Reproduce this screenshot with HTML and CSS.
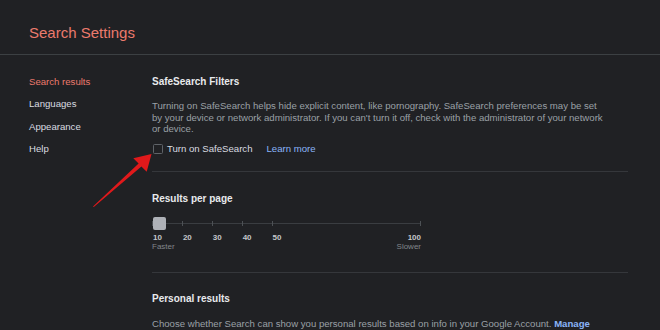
FILE: index.html
```html
<!DOCTYPE html>
<html lang="en">
<head>
  <meta charset="UTF-8" />
  <title>Search Settings</title>
  <link rel="stylesheet" href="styles.css">
</head>
<body>
  <header class="topbar">
    <h1>Search Settings</h1>
  </header>

  <div class="layout">
    <nav class="sidebar">
      <a class="nav-item active">Search results</a>
      <a class="nav-item">Languages</a>
      <a class="nav-item">Appearance</a>
      <a class="nav-item">Help</a>
    </nav>

    <main class="content">
      <section class="block first">
        <h2>SafeSearch Filters</h2>
        <p class="desc wrap">Turning on SafeSearch helps hide explicit content, like pornography. SafeSearch preferences may be set by your device or network administrator. If you can't turn it off, check with the administrator of your network or device.</p>
        <div class="check-row">
          <span class="checkbox"></span>
          <span class="check-label">Turn on SafeSearch</span>
          <a class="link">Learn more</a>
        </div>
      </section>

      <section class="block">
        <h2>Results per page</h2>
        <div class="slider">
          <div class="track">
            <div class="step"><span class="thumb"></span></div>
            <div class="step"></div>
            <div class="step"></div>
            <div class="step"></div>
            <div class="step"></div>
            <div class="step-fill"></div>
          </div>
          <div class="marks">
            <span class="step">10</span>
            <span class="step">20</span>
            <span class="step">30</span>
            <span class="step">40</span>
            <span class="step">50</span>
            <span class="step-fill">100</span>
          </div>
          <div class="ends">
            <span>Faster</span>
            <span>Slower</span>
          </div>
        </div>
      </section>

      <section class="block last">
        <h2>Personal results</h2>
        <p class="desc">Choose whether Search can show you personal results based on info in your Google Account. <a class="link strong">Manage</a></p>
      </section>
    </main>
  </div>

  <!-- red annotation arrow drawn over the page -->
  <svg class="annotation" width="660" height="330" viewBox="0 0 660 330">
    <polygon fill="#e0191b" points="93,206.5 138.6,163.4 133.3,158.3 151.5,154 146.7,171.7 141.4,166.6 93.8,207"/>
  </svg>
</body>
</html>
```

FILE: styles.css
```css
body {
  margin: 0;
  background: #202124;
  font-family: 'Liberation Sans', Arial, sans-serif;
  font-size: 9.6px;
  color: #dadce0;
  position: relative;
  height: 330px;
  overflow: hidden;
}
.topbar {
  height: 54px;
  border-bottom: 1px solid #3c4043;
  padding: 0 0 0 29px;
}
.topbar h1 {
  margin: 0;
  padding-top: 23.5px;
  font-size: 15px;
  line-height: 18px;
  font-weight: normal;
  color: #ec7a6d;
}
.layout {
  display: flex;
}
.sidebar {
  flex: 0 0 123px;
  padding: 15.5px 0 0 29px;
  display: flex;
  flex-direction: column;
}
.nav-item {
  line-height: 22.5px;
  color: #dadce0;
}
.nav-item.active {
  color: #ec7a6d;
}
.content {
  width: 476px;
}
.block {
  padding: 21px 0 16px;
  border-bottom: 1px solid #35373b;
}
.block.first {
  padding-top: 21px;
}
.block.last {
  border-bottom: none;
  padding-top: 20px;
}
h2 {
  margin: 0;
  font-size: 10px;
  line-height: 12px;
  font-weight: bold;
  color: #e8eaed;
}
.desc {
  margin: 13px 0 0;
  line-height: 11.5px;
  color: #9aa0a6;
  white-space: nowrap;
}
.desc.wrap {
  white-space: normal;
  max-width: 456px;
  margin-top: 12px;
}
.link {
  color: #8ab4f8;
}
.link.strong {
  font-weight: bold;
}
.check-row {
  display: flex;
  align-items: center;
  margin-top: 8px;
  line-height: 12px;
}
.checkbox {
  width: 8px;
  height: 8px;
  border: 1px solid #5f6368;
  border-radius: 1.5px;
  margin: 0 4px 0 1px;
}
.check-label {
  color: #dadce0;
  margin-right: 14px;
}
.slider {
  width: 269px;
  margin-top: 12.5px;
  padding-bottom: 5px;
}
.track {
  display: flex;
  height: 13px;
  background: linear-gradient(#3a3d41, #3a3d41) center / 100% 1px no-repeat;
}
.track .step {
  width: 29.89px;
  background: linear-gradient(#4d5155, #4d5155) left center / 1px 5px no-repeat;
}
.track .step-fill {
  flex: 1;
  background: linear-gradient(#4d5155, #4d5155) right center / 1px 5px no-repeat;
}
.thumb {
  display: block;
  width: 13px;
  height: 13px;
  margin-left: 1px;
  border-radius: 2px;
  background: #aeb1b7;
}
.marks {
  display: flex;
  margin-top: 2.5px;
  font-size: 8px;
  line-height: 9px;
  font-weight: bold;
  color: #c4c7ca;
}
.marks .step {
  width: 29.89px;
  padding-left: 1px;
  box-sizing: border-box;
}
.marks .step-fill {
  flex: 1;
  text-align: right;
}
.ends {
  display: flex;
  justify-content: space-between;
  margin-top: 0.5px;
  font-size: 8px;
  line-height: 9px;
  color: #80868b;
}
.annotation {
  position: absolute;
  left: 0;
  top: 0;
  pointer-events: none;
}
```
